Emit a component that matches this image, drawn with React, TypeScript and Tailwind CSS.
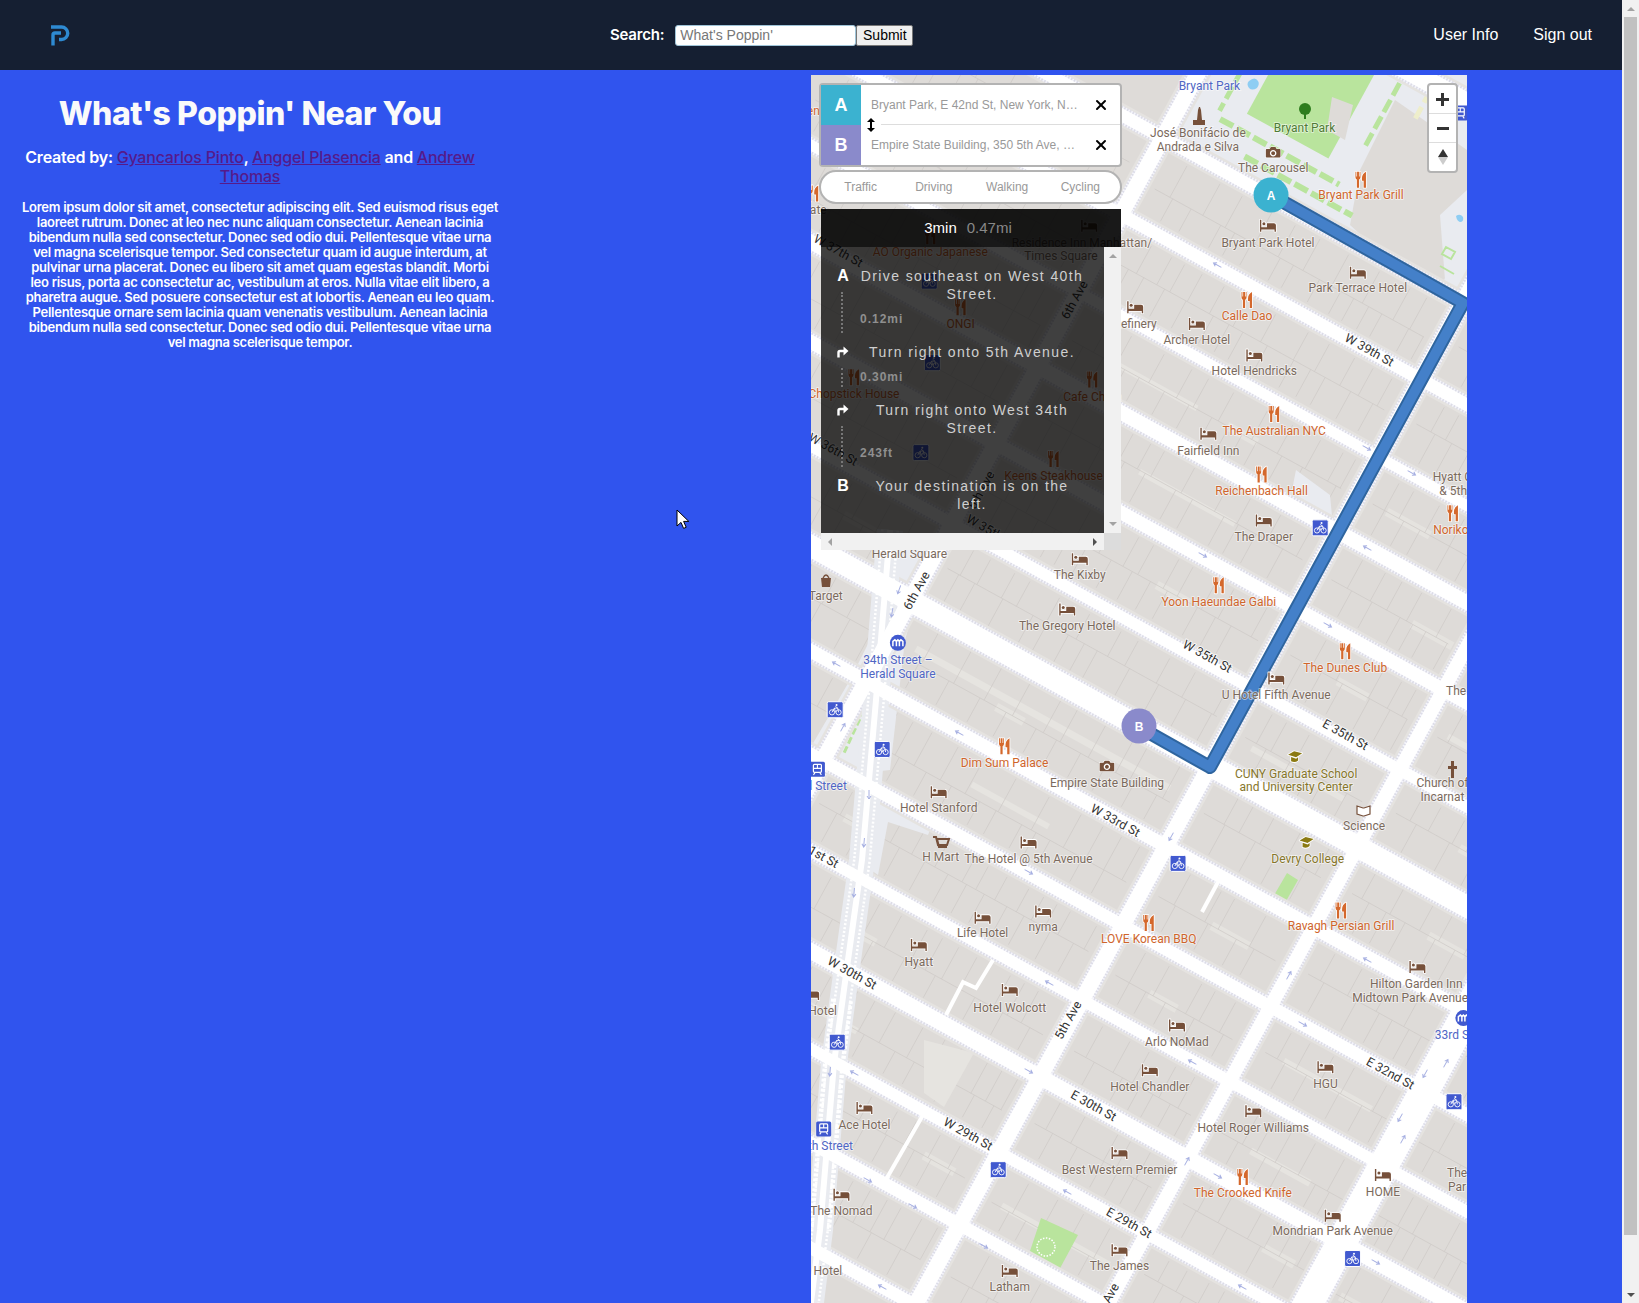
import { X } from "lucide-react";

const s = 1639 / 1568;

// grid helpers: streets are y = .55x + c, avenues are x + .546y = d
const P = (c: number, d: number): [number, number] => {
  const x = (d - 0.546 * c) / 1.3003;
  return [x, 0.55 * x + c];
};
const pts = (list: [number, number][]) => list.map((p) => p.join(",")).join(" ");
const quad = (c0: number, c1: number, d0: number, d1: number) =>
  pts([P(c0, d0), P(c0, d1), P(c1, d1), P(c1, d0)]);

const streets: [number, number][] = [
  [-402, 11], [-301, 9], [-204, 13], [-104, 12], [0, 10], [100, 20], [205, 12],
  [308, 11], [405, 10], [505, 14], [603, 10], [697, 11], [802, 11],
];
const avenues: [number, number][] = [[1238, 14], [1628, 14], [1820, 12], [2020, 28]];

const roads: { a: [number, number]; b: [number, number]; w: number }[] = [
  ...streets.map(([c, w]) => ({ a: P(c, 700), b: P(c, 2600), w })),
  { a: P(-502, 700), b: P(-502, 1240), w: 11 },
  { a: P(-502, 1240), b: P(-502, 2600), w: 11 },
  { a: P(-603, 1628), b: P(-603, 2600), w: 11 },
  { a: P(-603, 700), b: P(-603, 1238), w: 11 },
  { a: P(-704, 700), b: P(-704, 2600), w: 18 },
  ...avenues.map(([d, w]) => ({ a: P(-900, d), b: P(1000, d), w })),
];

const broadway = "890,530 876,700 862,860 848,960 834,1063 820,1230 810,1310";

// thin building outlines, seeded so the picture stays the same
let seed = 17;
const rnd = () => {
  seed = (seed * 16807) % 2147483647;
  return seed / 2147483647;
};
const buildingLines: [number, number, number, number][] = [];
const patches: string[] = [];
const cs = [-502, -402, -301, -204, -104, 0, 100, 205, 308, 405, 505, 603, 697, 802];
const ds = [850, 1238, 1628, 1820, 2020, 2200];
for (let i = 0; i < cs.length - 1; i++) {
  for (let j = 0; j < ds.length - 1; j++) {
    const c0 = cs[i] + 15;
    const c1 = cs[i + 1] - 15;
    const d0 = ds[j] + 20;
    const d1 = ds[j + 1] - 20;
    const mid = (c0 + c1) / 2 + (rnd() - 0.5) * 14;
    let a = P(mid, d0);
    let b = P(mid, d1);
    buildingLines.push([a[0], a[1], b[0], b[1]]);
    for (let k = 0; k < 2; k++) {
      let d = d0 + 12 + rnd() * 16;
      const top = k === 0 ? c0 : mid;
      const bot = k === 0 ? mid : c1;
      while (d < d1) {
        a = P(top, d);
        b = P(bot, d);
        buildingLines.push([a[0], a[1], b[0], b[1]]);
        d += 16 + rnd() * 28;
      }
    }
    if (rnd() > 0.45) {
      const pd = d0 + rnd() * (d1 - d0 - 30);
      patches.push(quad(mid - 5, mid + 5, pd, pd + 28 + rnd() * 30));
    }
  }
}

const strips: [number, number, number, number][] = [
  [-155, 1397, 1521, 6], [355, 1863, 1977, 7], [463, 1879, 1956, 7], [145, 1270, 1600, 7],
  [-250, 1300, 1420, 6], [60, 1660, 1780, 6], [560, 1300, 1420, 7], [655, 1660, 1800, 7],
  [250, 1400, 1500, 6], [750, 1300, 1500, 7], [-60, 1850, 1990, 6],
];

type Kind = "brown" | "orange" | "blue" | "green" | "olive";
const labelColor: Record<Kind, string> = {
  brown: "#7b6a5d",
  orange: "#cf652c",
  blue: "#5066c4",
  green: "#4f7a35",
  olive: "#86762b",
};

const labels: [string, number, number, Kind][] = [
  ["José Bonifácio de", 1146, 127, "brown"], ["Andrada e Silva", 1146, 141, "brown"],
  ["The Carousel", 1218, 161, "brown"], ["Bryant Park", 1248, 122, "green"],
  ["Bryant Park", 1157, 82, "blue"], ["Bryant Park Grill", 1302, 187, "orange"],
  ["Bryant Park Hotel", 1213, 232, "brown"], ["Park Terrace Hotel", 1299, 276, "brown"],
  ["Calle Dao", 1193, 302, "orange"], ["Archer Hotel", 1145, 325, "brown"],
  ["Hotel Hendricks", 1200, 355, "brown"], ["Refinery", 1086, 310, "brown"],
  ["Residence Inn Manhattan/", 1035, 232, "brown"], ["Times Square", 1015, 245, "brown"],
  ["The Australian NYC", 1219, 412, "orange"], ["Fairfield Inn", 1156, 431, "brown"],
  ["Reichenbach Hall", 1207, 470, "orange"], ["The Draper", 1209, 514, "brown"],
  ["Hyatt Centric", 1404, 456, "brown"], ["& 5th Ave", 1401, 470, "brown"],
  ["Noriko", 1388, 507, "orange"], ["Yoon Haeundae Galbi", 1166, 576, "orange"],
  ["The Kixby", 1033, 550, "brown"], ["The Gregory Hotel", 1021, 599, "brown"],
  ["Herald Square", 870, 530, "brown"], ["Target", 790, 570, "brown"],
  ["34th Street –", 859, 631, "blue"], ["Herald Square", 859, 645, "blue"],
  ["The Dunes Club", 1287, 639, "orange"], ["U Hotel Fifth Avenue", 1221, 665, "brown"],
  ["The", 1393, 661, "brown"], ["Dim Sum Palace", 961, 730, "orange"],
  ["Empire State Building", 1059, 749, "brown"], ["CUNY Graduate School", 1240, 740, "olive"],
  ["and University Center", 1240, 753, "olive"], ["Church of", 1380, 749, "brown"],
  ["Incarnat", 1380, 762, "brown"], ["Hotel Stanford", 898, 773, "brown"],
  ["Science", 1305, 790, "brown"], ["Devry College", 1251, 822, "olive"],
  ["H Mart", 900, 820, "brown"], ["The Hotel @ 5th Avenue", 984, 822, "brown"],
  ["Ravagh Persian Grill", 1283, 886, "orange"], ["nyma", 998, 887, "brown"],
  ["LOVE Korean BBQ", 1099, 898, "orange"], ["Life Hotel", 940, 893, "brown"],
  ["Hyatt", 879, 920, "brown"], ["Hilton Garden Inn", 1355, 941, "brown"],
  ["Midtown Park Avenue", 1349, 955, "brown"], ["33rd St", 1391, 990, "blue"],
  ["Hotel Wolcott", 966, 964, "brown"], ["Hotel", 787, 967, "brown"],
  ["Arlo NoMad", 1126, 997, "brown"], ["Hotel Chandler", 1100, 1040, "brown"],
  ["HGU", 1268, 1037, "brown"], ["Ace Hotel", 827, 1076, "brown"],
  ["Hotel Roger Williams", 1199, 1079, "brown"], ["Best Western Premier", 1071, 1119, "brown"],
  ["The Crooked Knife", 1189, 1141, "orange"], ["HOME", 1323, 1140, "brown"],
  ["The", 1394, 1122, "brown"], ["Par", 1394, 1136, "brown"],
  ["The Nomad", 805, 1159, "brown"], ["Mondrian Park Avenue", 1275, 1178, "brown"],
  ["The James", 1071, 1211, "brown"], ["Latham", 966, 1231, "brown"],
  ["Hotel", 792, 1216, "brown"], ["28th Street", 788, 1096, "blue"],
  ["33rd Street", 782, 752, "blue"], ["ONGI", 919, 310, "orange"],
  ["Chopstick House", 817, 377, "orange"], ["Cafe China", 1045, 380, "orange"],
  ["Keens Steakhouse", 1008, 455, "orange"], ["AO Organic Japanese", 890, 241, "orange"],
  ["Chocolate", 765, 201, "brown"], ["Olive Garden", 752, 106, "orange"],
];

const beds = [
  [1213, 216], [1299, 261], [1145, 310], [1200, 340], [1086, 294], [1042, 216], [1156, 415],
  [1209, 498], [1033, 535], [1021, 583], [1221, 649], [898, 758], [984, 806], [998, 872],
  [940, 878], [879, 904], [1356, 925], [966, 947], [776, 951], [1126, 981], [1100, 1024],
  [1268, 1021], [827, 1060], [1199, 1063], [1071, 1103], [1323, 1124], [805, 1143],
  [1275, 1163], [1071, 1196], [966, 1216],
];
const forks = [
  [1302, 172], [1193, 287], [1219, 396], [1207, 454], [1390, 491], [1166, 560], [1287, 623],
  [961, 714], [1283, 871], [1099, 883], [1189, 1126], [919, 294], [817, 361], [1045, 363],
  [1008, 439], [890, 226], [778, 185],
];
const bikes = [
  [1263, 505], [799, 679], [844, 717], [1127, 826], [801, 997], [955, 1119], [1391, 1054],
  [1294, 1204], [889, 269], [892, 347], [881, 433],
];
const trains = [[782, 736], [788, 1080], [1397, 108]];
const subways = [[859, 615], [1400, 974]];

const streetNames: [string, number, number, number][] = [
  ["W 39th St", 1310, 335, 29], ["W 35th St", 1155, 628, 29], ["E 35th St", 1287, 703, 29],
  ["W 33rd St", 1067, 785, 29], ["E 32nd St", 1330, 1027, 29], ["W 30th St", 815, 931, 29],
  ["W 29th St", 926, 1085, 29], ["E 30th St", 1046, 1058, 29], ["E 29th St", 1080, 1170, 29],
  ["W 31st St", 779, 815, 29], ["W 37th St", 802, 240, 29], ["W 36th St", 797, 430, 29],
  ["W 35th St", 948, 508, 29], ["6th Ave", 877, 565, -61], ["5th Ave", 1022, 976, -61],
  ["6th Ave", 1028, 287, -61], ["5th Ave", 1058, 1246, -61], ["5th Ave", 939, 469, -61],
];

const arrows: [number, number, number][] = [
  [1367, 448, 29], [1412, 473, 29], [1367, 548, 209], [1203, 555, 29], [1328, 625, 29],
  [1217, 265, 209], [836, 664, 209], [959, 733, 209], [1029, 872, 29], [843, 727, -61],
  [899, 590, 110], [892, 613, 100], [869, 795, 90], [864, 843, 95], [854, 893, 95],
  [1049, 983, 209], [1029, 1071, 29], [854, 1073, 209], [868, 1180, 29], [913, 1206, 29],
  [984, 1246, 29], [882, 1287, 209], [1067, 1192, 209], [830, 1072, 95], [1367, 960, 209],
  [1289, 975, -61], [1303, 1024, 29], [1192, 1062, 209], [1425, 1074, 119], [1446, 1063, -61],
  [1400, 1118, 119], [1403, 1139, -61], [1187, 1161, -61], [1218, 1176, 29], [1376, 1262, 29],
  [1242, 1287, 209], [1171, 837, 119],
];

const halo = { stroke: "#fff", strokeWidth: 1.6, paintOrder: "stroke" as const, strokeLinejoin: "round" as const };

function Bed({ x, y }: { x: number; y: number }) {
  return (
    <g transform={`translate(${x} ${y})`} fill="#76503a" {...halo}>
      <path d="M-8-6v12h1.4V3.6h13.2V6H8V-.6a2 2 0 0 0-2-2H-1V1.5h-5.6V-6z" />
      <circle cx="-4" cy="-2" r="1.5" />
    </g>
  );
}

function Fork({ x, y }: { x: number; y: number }) {
  return (
    <g transform={`translate(${x} ${y})`} fill="#d4682c" {...halo}>
      <path d="M-5.5-8v5.5q0 1.8 1.4 2.3V8h2.2V-.2q1.4-.5 1.4-2.3V-8H-1.3v4.6h-.7V-8H-3.9v4.6h-.7V-8z" />
      <path d="M5-8Q1-6 1-1.5V1h1.7v7H5z" />
    </g>
  );
}

function Bike({ x, y }: { x: number; y: number }) {
  return (
    <g transform={`translate(${x} ${y})`}>
      <rect x="-8" y="-8" width="16" height="16" rx="1.5" fill="#4159cf" stroke="#fff" strokeWidth="1" />
      <g fill="none" stroke="#fff" strokeWidth="0.9">
        <circle cx="-3.2" cy="2.6" r="2.6" />
        <circle cx="3.4" cy="2.6" r="2.6" />
        <path d="M-3.2 2.6-.8-1.6h3.4L3.4 2.6M-.8-1.6.4 2.6M.2-3.4 2.6-1.6" />
      </g>
      <circle cx="1.4" cy="-4.8" r="1" fill="#fff" />
    </g>
  );
}

function Train({ x, y }: { x: number; y: number }) {
  return (
    <g transform={`translate(${x} ${y})`}>
      <rect x="-7.5" y="-7.5" width="15" height="15" rx="1.5" fill="#4159cf" />
      <rect x="-4" y="-5" width="8" height="8" rx="1" fill="none" stroke="#fff" strokeWidth="1.2" />
      <path d="M-4-1h8M0-5v4M-4 5.5l1.5-2M4 5.5l-1.5-2" stroke="#fff" strokeWidth="1.1" />
    </g>
  );
}

function Subway({ x, y }: { x: number; y: number }) {
  return (
    <g transform={`translate(${x} ${y})`}>
      <circle r="8" fill="#4159cf" />
      <path d="M-5 3.5v-5l2-1.5 1.5 1.5L0-3l1.5 1.5L3-3l2 1.5v5M-1.5-1v4.5M1.5-1v4.5" fill="none" stroke="#fff" strokeWidth="1.5" />
    </g>
  );
}

function Camera({ x, y }: { x: number; y: number }) {
  return (
    <g transform={`translate(${x} ${y})`}>
      <path d="M-6.5-3.5h3l1.2-2h4.6l1.2 2h3q.8 0 .8.8v6.9q0 .8-.8.8h-13q-.8 0-.8-.8v-6.9q0-.8.8-.8z" fill="#76503a" stroke="#fff" strokeWidth="1.2" paintOrder="stroke" />
      <circle cy="0.6" r="2.6" fill="none" stroke="#fff" strokeWidth="1.3" />
    </g>
  );
}

function Cap({ x, y }: { x: number; y: number }) {
  return (
    <g transform={`translate(${x} ${y})`} fill="#8b7a12" {...halo}>
      <path d="M-7-2-1-5.5 7-3.5 1 .5z" />
      <path d="M-4 .2V4.5Q0 6.5 3 3.6V.5L1 2z" />
    </g>
  );
}

function Arrow({ x, y, r }: { x: number; y: number; r: number }) {
  return (
    <path
      transform={`translate(${x} ${y}) rotate(${r})`}
      d="M-5 0H4M1-2 4 0 1 2"
      fill="none"
      stroke="#a7b0e2"
      strokeWidth="1"
    />
  );
}

function MapCanvas() {
  return (
    <svg className="block" width="656" height="1228" viewBox="811 75 656 1228" fontFamily="Roboto, sans-serif">
      <rect x="811" y="75" width="656" height="1228" fill="#dedbd8" />

      {patches.map((p, i) => <polygon key={i} points={p} fill="#e5e3df" />)}
      {strips.map(([c, d0, d1, w], i) => {
        const a = P(c, d0);
        const b = P(c, d1);
        return <line key={i} x1={a[0]} y1={a[1]} x2={b[0]} y2={b[1]} stroke="#e6e4e0" strokeWidth={w} />;
      })}
      {buildingLines.map((l, i) => (
        <line key={i} x1={l[0]} y1={l[1]} x2={l[2]} y2={l[3]} stroke="#cdc9c5" strokeWidth="0.7" />
      ))}
      <polygon points="924,1040 974,1053 944,1107 924,1093" fill="#e6e4e0" />

      {/* park and plazas */}
      <polygon points={quad(-512, -760, 1250, 1615)} fill="#e9ebf0" />
      <polygon points="1395,100 1467,150 1467,225 1440,290 1380,252 1350,225 1360,170" fill="#dedbd8" />
      <polygon points="1440,215 1467,190 1467,280 1445,280" fill="#e9ebf0" />
      <path d="M1456 216q4-3 7 1 1 4-2 5-4 0-5-6z" fill="#8ecdf3" />
      <path d="M1446 247l9 5-4 7-9-5zM1440 266l14 8" fill="none" stroke="#b9e49d" strokeWidth="2" />
      <polygon points={quad(-572, -760, 1309, 1415)} fill="#b9e49d" />
      <polygon points="1332,97 1353,105 1345,140 1327,130" fill="#dedbd8" />
      {[
        [-552, 1285, 1440], [-528, 1330, 1470],
      ].map(([c, d0, d1], i) => {
        const a = P(c, d0);
        const b = P(c, d1);
        return <line key={i} x1={a[0]} y1={a[1]} x2={b[0]} y2={b[1]} stroke="#b9e49d" strokeWidth="6" strokeDasharray="15 4" />;
      })}
      {[
        [1280, -700, -560, "#b9e49d"], [1445, -730, -600, "#b9e49d"], [1480, -740, -660, "#eeeecb"],
      ].map(([d, c0, c1, color], i) => {
        const a = P(c0 as number, d as number);
        const b = P(c1 as number, d as number);
        return <line key={i} x1={a[0]} y1={a[1]} x2={b[0]} y2={b[1]} stroke={color as string} strokeWidth="5" strokeDasharray="14 5" />;
      })}
      <polygon points="885,540 932,545 905,640 890,770 845,775 812,745 850,680 880,620" fill="#e9ebf0" />
      <polygon points="874,795 932,825 928,835 888,822 878,875 868,868" fill="#e9ebf0" />
      <polygon points="1296,470 1330,495 1332,516 1290,500" fill="#e9ebf0" />
      <line x1="864" y1="710" x2="844" y2="753" stroke="#b9e49d" strokeWidth="3" strokeDasharray="7 3" />
      <polygon points="1287,873 1298,880 1285,903 1273,897" fill="#b9e49d" />
      <polygon points="1041,1218 1078,1235 1058,1272 1028,1257" fill="#b9e49d" />
      <circle cx="1046" cy="1247" r="9" fill="none" stroke="#fff" strokeWidth="1.5" strokeDasharray="1.5 1.5" />

      {/* road casing, dotted kerb, then the white road on top */}
      {roads.map((r, i) => (
        <line key={i} x1={r.a[0]} y1={r.a[1]} x2={r.b[0]} y2={r.b[1]} stroke="#e5e3e0" strokeWidth={r.w + 11} />
      ))}
      {roads.map((r, i) => (
        <line key={i} x1={r.a[0]} y1={r.a[1]} x2={r.b[0]} y2={r.b[1]} stroke="#dcdce7" strokeWidth={r.w + 6} />
      ))}
      {roads.map((r, i) => (
        <line key={i} x1={r.a[0]} y1={r.a[1]} x2={r.b[0]} y2={r.b[1]} stroke="#f5f5fb" strokeWidth={r.w + 6} strokeDasharray="1.6 1.6" />
      ))}
      <polyline points={broadway} fill="none" stroke="#e9ebf0" strokeWidth="26" />
      <polyline points={broadway} fill="none" stroke="#fff" strokeWidth="18" strokeDasharray="2 2" />
      <polyline points="842,1000 834,1063 820,1230" fill="none" stroke="#fff" strokeWidth="22" strokeDasharray="3 2" />
      <polyline points={broadway} fill="none" stroke="#e9ebf0" strokeWidth="13" />
      {roads.map((r, i) => (
        <line key={i} x1={r.a[0]} y1={r.a[1]} x2={r.b[0]} y2={r.b[1]} stroke="#fff" strokeWidth={r.w + 1.5} />
      ))}
      <polyline points={broadway} fill="none" stroke="#fff" strokeWidth="6" />
      <polyline points="993,960 976,988 963,982 946,1015" fill="none" stroke="#fff" strokeWidth="4" />
      <line x1="923" y1="1115" x2="884" y2="1183" stroke="#fff" strokeWidth="4" />
      <line x1="1218" y1="882" x2="1202" y2="912" stroke="#fff" strokeWidth="4" />

      {arrows.map(([x, y, r], i) => <Arrow key={i} x={x} y={y} r={r} />)}

      {/* route */}
      <polyline points="1271,195 1463,303 1210,767 1139,727" fill="none" stroke="#2f659f" strokeWidth="14" strokeLinejoin="round" />
      <polyline points="1271,195 1463,303 1210,767 1139,727" fill="none" stroke="#4480c9" strokeWidth="10" strokeLinejoin="round" />

      {streetNames.map(([t, x, y, r], i) => (
        <text
          key={i}
          transform={`translate(${x * s} ${y * s}) rotate(${r})`}
          textAnchor="middle"
          dy="4"
          fontSize="12.5"
          fill="#333"
          stroke="#fff"
          strokeWidth="1.6"
          paintOrder="stroke"
        >
          {t}
        </text>
      ))}

      {beds.map(([x, y], i) => <Bed key={i} x={x * s} y={y * s} />)}
      {forks.map(([x, y], i) => <Fork key={i} x={x * s} y={y * s} />)}
      {bikes.map(([x, y], i) => <Bike key={i} x={x * s} y={y * s} />)}
      {trains.map(([x, y], i) => <Train key={i} x={x * s} y={y * s} />)}
      {subways.map(([x, y], i) => <Subway key={i} x={x * s} y={y * s} />)}
      <Camera x={1218 * s} y={146 * s} />
      <Camera x={1059 * s} y={733 * s} />
      <Cap x={1239 * s} y={724 * s} />
      <Cap x={1250 * s} y={806 * s} />

      {/* one-off pois */}
      <path d="M1193 120h4l1-10 1-3h1l1 3 1 10h3v5h-12z" fill="#76503a" />
      <g fill="#2e7d1e">
        <circle cx="1305" cy="109" r="6" />
        <rect x="1304" y="112" width="2" height="7" />
      </g>
      <path d="M1249 81q6-5 9 0 2 3-1 7-5 3-8 0-3-4 0-7z" fill="#8ecdf3" />
      <path d="M1357 806l6 2 1 0 6-2v8l-6 2h-1l-6-2z" fill="#fff" stroke="#76503a" strokeWidth="1.2" />
      <path d="M1448 766h3v-5h3v5h3v3h-3v9h-3v-9h-3z" fill="#76503a" />
      <path d="M933 837h3l2 8h9l2-6h-12l2 8h8" fill="none" stroke="#76503a" strokeWidth="2" />
      <path d="M821 578h10l-1 9h-8z" fill="#76503a" />
      <path d="M823 578q3-6 6 0" fill="none" stroke="#76503a" strokeWidth="1.3" />

      {labels.map(([t, x, y, kind], i) => (
        <text
          key={i}
          x={x * s}
          y={y * s + 4}
          textAnchor="middle"
          fontSize="12"
          fill={labelColor[kind]}
          stroke="#fff"
          strokeOpacity="0.6"
          strokeWidth="1.6"
          paintOrder="stroke"
        >
          {t}
        </text>
      ))}

      {/* route ends */}
      <circle cx="1271" cy="195" r="17.5" fill="#3bb2d0" />
      <text x="1271" y="199.5" textAnchor="middle" fontSize="12" fontWeight="700" fill="#fff" fontFamily="Liberation Sans, sans-serif">A</text>
      <circle cx="1139" cy="726" r="17.5" fill="#8a8acb" />
      <text x="1139" y="730.5" textAnchor="middle" fontSize="12" fontWeight="700" fill="#fff" fontFamily="Liberation Sans, sans-serif">B</text>
    </svg>
  );
}

function TurnIcon() {
  return (
    <svg width="12" height="12" viewBox="0 0 12 12" fill="none">
      <path d="M1.5 11.5V6.5Q1.5 5 3 5h5" stroke="#fff" strokeWidth="2.4" />
      <path d="M6.5 0.5l5 4.5-5 4.5z" fill="#fff" />
    </svg>
  );
}

const steps = [
  { icon: "A", text: ["Drive southeast on West 40th", "Street."], dist: "0.12mi", line: "top-[25px] h-[41px]" },
  { icon: "turn", text: ["Turn right onto 5th Avenue."], dist: "0.30mi", line: "top-[25px] h-[19px]" },
  { icon: "turn", text: ["Turn right onto West 34th", "Street."], dist: "243ft", line: "top-[25px] h-[41px]" },
  { icon: "B", text: ["Your destination is on the", "left."], dist: "", line: "" },
];

function Directions() {
  return (
    <div className="absolute left-[10px] top-[134px] w-[300px] font-['Liberation_Sans',sans-serif]">
      <div className="flex h-[38px] items-center justify-center gap-[10px] bg-[#000000e6] pr-[6px] text-[15px] text-[#888]">
        <span className="font-normal text-white">3min</span>
        <span>0.47mi</span>
      </div>
      <div className="grid grid-cols-[283px_17px] grid-rows-[286px_17px]">
        <div className="bg-[#000000bf] pt-5 text-sm tracking-[1.4px] text-[#cfcfcf]">
          {steps.map((step) => (
            <div key={step.text[0]} className="relative pb-4 pl-[38px] pr-[19px]">
              <div className="absolute left-[12px] top-0 flex h-[18px] w-5 items-center justify-center text-base font-bold tracking-normal text-white">
                {step.icon === "turn" ? <TurnIcon /> : step.icon}
              </div>
              {step.line && (
                <div className={`absolute left-[20px] border-l-2 border-dotted border-[#777] ${step.line}`} />
              )}
              <div className="text-center leading-[18px]">
                {step.text.map((line) => (
                  <div key={line} className="whitespace-nowrap">{line}</div>
                ))}
              </div>
              {step.dist && (
                <div className="pl-[1px] pt-2 text-xs font-bold leading-4 tracking-[1px] text-[#8f8f8f]">{step.dist}</div>
              )}
            </div>
          ))}
        </div>
        <div className="flex flex-col items-center justify-between bg-[#f1f1f1] py-[7px]">
          <div className="h-0 w-0 border-x-[4px] border-b-[4px] border-x-transparent border-b-[#a3a3a3]" />
          <div className="h-0 w-0 border-x-[4px] border-t-[4px] border-x-transparent border-t-[#a3a3a3]" />
        </div>
        <div className="flex items-center justify-between bg-[#f1f1f1] px-[7px]">
          <div className="h-0 w-0 border-y-[4px] border-r-[4px] border-y-transparent border-r-[#a3a3a3]" />
          <div className="h-0 w-0 border-y-[4px] border-l-[4px] border-y-transparent border-l-[#505050]" />
        </div>
        <div className="bg-[#dcdcdc]" />
      </div>
    </div>
  );
}

function MapPanel() {
  return (
    <div className="relative mt-[5px] h-[1228px] w-[656px] overflow-hidden">
      <MapCanvas />

      {/* origin / destination inputs */}
      <div className="absolute left-[8px] top-[8px] w-[303px] rounded border-2 border-[#b3b3b3] bg-white font-['Liberation_Sans',sans-serif] text-xs text-[#999]">
        <div className="relative flex h-10 items-center">
          <div className="flex h-10 w-10 items-center justify-center bg-[#3bb2d0] text-lg font-bold text-white">A</div>
          <div className="ml-[10px] w-[208px] truncate">Bryant Park, E 42nd St, New York, NY 10018</div>
          <X className="ml-[14px] text-black" size={16} strokeWidth={3} />
          <div className="absolute bottom-0 left-[60px] right-0 h-px bg-[#ddd]" />
        </div>
        <div className="flex h-10 items-center">
          <div className="flex h-10 w-10 items-center justify-center bg-[#8a8acb] text-lg font-bold text-white">B</div>
          <div className="ml-[10px] w-[208px] truncate">Empire State Building, 350 5th Ave, New York</div>
          <X className="ml-[14px] text-black" size={16} strokeWidth={3} />
        </div>
        <svg className="absolute left-[45px] top-[33px]" width="10" height="14" viewBox="0 0 10 14">
          <path d="M5 0l4 4H6v6h3l-4 4-4-4h3V4H1z" fill="#000" />
        </svg>
      </div>

      {/* profile pill */}
      <div className="absolute left-[8px] top-[95px] grid h-[34px] w-[303px] grid-cols-4 items-center rounded-full border-2 border-[#b3b3b3] bg-white px-[3px] font-['Liberation_Sans',sans-serif] text-xs text-[#999]">
        <span className="text-center">Traffic</span>
        <span className="text-center">Driving</span>
        <span className="text-center">Walking</span>
        <span className="text-center">Cycling</span>
      </div>

      <Directions />

      {/* zoom control */}
      <div className="absolute left-[616px] top-[8px] w-[31px] rounded border-2 border-[#b3b3b3] bg-white">
        <div className="flex h-[29px] items-center justify-center border-b border-[#ddd]">
          <svg width="13" height="13" viewBox="0 0 13 13"><path d="M5 0h3v5h5v3H8v5H5V8H0V5h5z" fill="#333" /></svg>
        </div>
        <div className="flex h-[29px] items-center justify-center border-b border-[#ddd]">
          <div className="h-[3px] w-[12px] bg-[#333]" />
        </div>
        <div className="flex h-[28px] flex-col items-center justify-center">
          <div className="h-0 w-0 border-x-[5px] border-b-[8px] border-x-transparent border-b-[#333]" />
          <div className="h-0 w-0 border-x-[5px] border-t-[8px] border-x-transparent border-t-[#ccc]" />
        </div>
      </div>
    </div>
  );
}

const intro = [
  "Lorem ipsum dolor sit amet, consectetur adipiscing elit. Sed euismod risus eget",
  "laoreet rutrum. Donec at leo nec nunc aliquam consectetur. Aenean lacinia",
  "bibendum nulla sed consectetur. Donec sed odio dui. Pellentesque vitae urna",
  "vel magna scelerisque tempor. Sed consectetur quam id augue interdum, at",
  "pulvinar urna placerat. Donec eu libero sit amet quam egestas blandit. Morbi",
  "leo risus, porta ac consectetur ac, vestibulum at eros. Nulla vitae elit libero, a",
  "pharetra augue. Sed posuere consectetur est at lobortis. Aenean eu leo quam.",
  "Pellentesque ornare sem lacinia quam venenatis vestibulum. Aenean lacinia",
  "bibendum nulla sed consectetur. Donec sed odio dui. Pellentesque vitae urna",
  "vel magna scelerisque tempor.",
];

function Header() {
  return (
    <header className="relative flex h-[70px] items-center bg-[#151f32] font-['Liberation_Sans',sans-serif]">
      <svg className="ml-[50px]" width="20" height="22" viewBox="0 0 20 22" fill="none" stroke="#2e8ad2" strokeWidth="3.4">
        <path d="M1 3h10.5a6 6 0 0 1 0 12.5H9" />
        <path d="M3 21.5V11q0-2 2-2h6" />
      </svg>
      <form className="ml-[540px] flex items-center">
        <label className="mr-[11px] font-['Inter',sans-serif] text-[15px] font-semibold tracking-[-0.2px] text-white">Search:</label>
        <input
          placeholder="What's Poppin'"
          className="h-[21px] w-[181px] rounded-[3px] border border-[#9fc4d8] bg-white px-1 text-sm placeholder:text-[#777]"
        />
        <button type="button" className="h-[21px] w-[57px] rounded-[2px] border border-[#767676] bg-[#efefef] text-sm leading-4 text-black">
          Submit
        </button>
      </form>
      <nav className="ml-auto mr-[30px] flex gap-[35px] text-base text-white">
        <a>User Info</a>
        <a>Sign out</a>
      </nav>
    </header>
  );
}

export default function App() {
  return (
    <div className="relative flex h-[1303px] w-full overflow-hidden bg-[#3054ee]">
      <div className="w-[1622px]">
        <Header />
        <main className="flex">
          <section className="w-[811px] text-center font-['Inter',sans-serif] text-white">
            <h1 className="w-[500px] pt-[25px] text-[32px] font-extrabold leading-[38px] tracking-[-0.45px] text-[#fafafa]">
              What's Poppin' Near You
            </h1>
            <p className="mt-[15px] w-[500px] px-[20px] text-base font-semibold leading-[19px] tracking-[-0.2px]">
              Created by: <a className="font-medium text-[#551a8b] underline">Gyancarlos Pinto</a>,{" "}
              <a className="font-medium text-[#551a8b] underline">Anggel Plasencia</a> and{" "}
              <a className="font-medium text-[#551a8b] underline">Andrew Thomas</a>
            </p>
            <div className="mt-[14px] w-[520px] text-[13px] font-semibold leading-[15px] tracking-[-0.27px]">
              {intro.map((line) => (
                <div key={line} className="whitespace-nowrap">{line}</div>
              ))}
            </div>
          </section>
          <MapPanel />
        </main>
      </div>

      {/* page scrollbar */}
      <div className="flex w-[17px] flex-col items-center bg-[#f1f1f1]">
        <div className="flex h-[17px] items-center justify-center">
          <div className="h-0 w-0 border-x-[4px] border-b-[4px] border-x-transparent border-b-[#a3a3a3]" />
        </div>
        <div className="h-[1218px] w-[13px] bg-[#c1c1c1]" />
        <div className="mt-auto flex h-[17px] items-center justify-center">
          <div className="h-0 w-0 border-x-[4px] border-t-[4px] border-x-transparent border-t-[#505050]" />
        </div>
      </div>

      {/* mouse pointer */}
      <svg className="absolute left-[676px] top-[509px]" width="14" height="21" viewBox="0 0 14 21">
        <path d="M1 1v16l4-3.6 2.6 6 2.6-1.1-2.6-5.9h5.2z" fill="#fff" stroke="#000" strokeWidth="1" />
      </svg>
    </div>
  );
}
